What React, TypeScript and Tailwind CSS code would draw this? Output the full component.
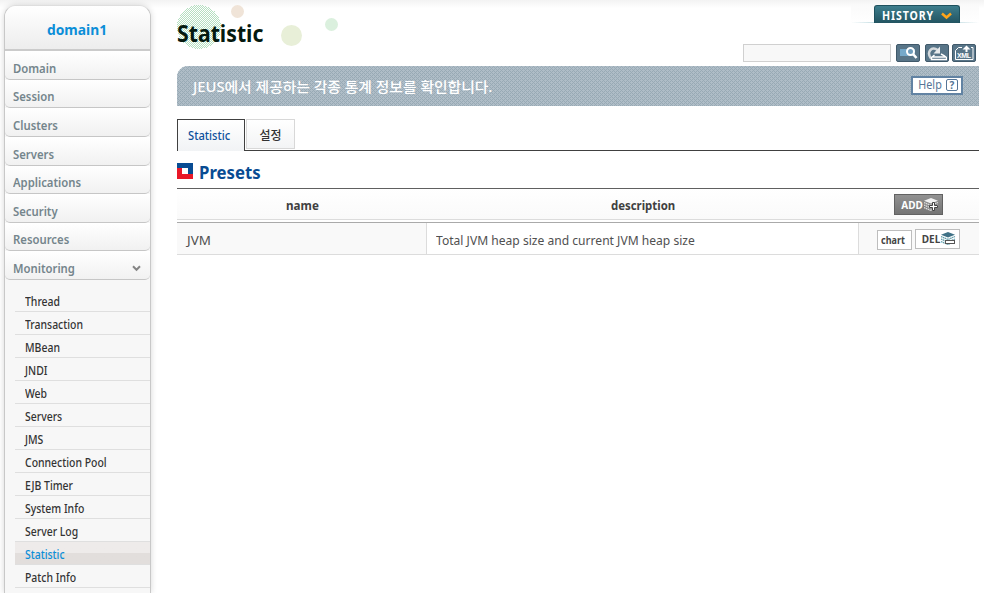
import React from "react";

const menu = ["Domain", "Session", "Clusters", "Servers", "Applications", "Security", "Resources", "Monitoring"];
const heights = ["h-[29px]", "h-[28px]", "h-[29px]", "h-[29px]", "h-[28px]", "h-[29px]", "h-[28px]", "h-[29px]"];
const monitoring = ["Thread", "Transaction", "MBean", "JNDI", "Web", "Servers", "JMS", "Connection Pool", "EJB Timer", "System Info", "Server Log", "Statistic", "Patch Info"];

function Label({ className = "", children }: { className?: string; children: React.ReactNode }) {
  return <span className={`inline-block origin-left whitespace-nowrap ${className}`}>{children}</span>;
}

function Sidebar() {
  return (
    <aside className="ml-1 mt-[5px] h-[588px] w-[147px] shrink-0 rounded-t-[12px] border border-b-0 border-[#c8c8c8] border-t-[#dedede] bg-[#f7f7f7] shadow-[0_0_6px_rgba(0,0,0,0.16)]">
      <div className="flex h-[45px] items-center justify-center rounded-t-[11px] border-b-2 border-[#cbcbcb] bg-linear-to-b from-white to-[#ededed] pl-[4px] pt-[3px] text-[15px] font-bold text-[#0b8ed8]">
        <Label className="origin-center scale-x-[0.92]">domain1</Label>
      </div>
      <nav>
        {menu.map((m, i) => (
          <div key={m} className={`flex items-center justify-between rounded-b-[5px] border-b border-[#c6c6c6] bg-linear-to-b from-white to-[#f1f1f1] pl-[7.500px] pr-[9px] pt-[7px] text-[13px] font-semibold text-[#74858c] ${heights[i]}`}>
            <Label className="scale-x-[0.87]">{m}</Label>
            {m === "Monitoring" && (
              <svg width="9" height="7" viewBox="0 0 9 7" fill="none" stroke="#858585" strokeWidth="2"><path d="M1 1.3 4.500 4.800 8 1.3" /></svg>
            )}
          </div>
        ))}
      </nav>
      <ul className="ml-[10px] mt-[9px]">
        {monitoring.map((m) => (
          <li key={m} className={`flex h-[23px] items-center border-b border-[#dfdfdf] pl-[9.500px] pt-[4px] text-[12px] font-medium ${m === "Statistic" ? "bg-linear-to-b from-[#eeebea] from-50% to-[#e2dedc] to-50% text-[#0b8ed8]" : "text-[#333]"}`}>
            <Label className="scale-x-[0.87]">{m}</Label>
          </li>
        ))}
      </ul>
    </aside>
  );
}

function ToolButton({ children }: { children: React.ReactNode }) {
  return <button className="flex h-[18px] w-[24px] items-center justify-center rounded-[2px] border border-[#40596a] bg-[#587588]">{children}</button>;
}

function Layers({ dark = false }: { dark?: boolean }) {
  const c = dark ? "#3f7186" : "#f2f2f2";
  const d = dark ? "#5f9ba8" : "#dedede";
  return (
    <svg width="15" height="14" viewBox="0 0 15 14" className="shrink-0">
      <path d="M7 0 14 2.800 7 5.500 0 2.800Z" fill={c} />
      <path d="m0 4.500 7 3 7-3M0 7l7 3 7-3M0 9.500l7 3 4-2" fill="none" stroke={d} strokeWidth="1.300" strokeDasharray="1.500 .5" />
      {dark ? <rect x="4.500" y="8.500" width="9" height="3" fill="#fff" stroke="#555" /> : (
        <path d="M8.500 4.500h2v3h3v2h-3v3h-2v-3h-3v-2h3z" fill="#fff" stroke="#444" />
      )}
    </svg>
  );
}

function Title() {
  return (
    <div className="relative h-[66px] w-[200px]">
      <svg className="absolute left-0 top-0" width="180" height="60">
        <defs>
          <pattern id="dots" width="2" height="2" patternUnits="userSpaceOnUse">
            <rect width="1" height="1" fill="#b5dfc1" /><rect x="1" y="1" width="1" height="1" fill="#b5dfc1" />
          </pattern>
        </defs>
        <circle cx="22" cy="27" r="22" fill="url(#dots)" shapeRendering="crispEdges" />
        <circle cx="60.500" cy="11.500" r="6.500" fill="#f0e4d8" />
        <circle cx="114.500" cy="35.500" r="10.500" fill="#e8efd8" />
        <circle cx="154.500" cy="24.500" r="6.500" fill="#dbf0de" />
      </svg>
      <h1 className="relative pt-[16px] text-[24px] font-bold leading-[34px] text-[#04190f]"><Label className="scale-x-[0.885]">Statistic</Label></h1>
    </div>
  );
}

function Tools() {
  return (
    <div className="flex flex-col items-end">
      <div className="mt-[5px] flex h-[18px] w-[128px] justify-center bg-linear-to-b from-[#fafafa] to-white">
        <div className="relative flex w-full pl-[23px]">
          <div className="absolute inset-x-0 bottom-0 h-px bg-linear-to-r from-transparent via-[#5fa4b2] to-transparent" />
          <button className="relative flex h-[18px] w-[86px] items-center gap-[6px] rounded-t-[3px] border border-b-0 border-[#1e515e] bg-linear-to-b from-[#3d7e8d] to-[#235461] pl-[7px] pt-[3px] text-[12px] font-bold leading-none tracking-[1px] text-white">
            <Label className="w-[53px] scale-x-[0.88]">HISTORY</Label>
            <svg width="11" height="8" viewBox="0 0 11 8" fill="none" stroke="#ffa51b" strokeWidth="2.500"><path d="m1 1.500 4.500 4 4.500-4" /></svg>
          </button>
        </div>
      </div>
      <div className="mr-[3px] mt-[21px] flex">
        <input className="mr-[5px] h-[18px] w-[148px] border border-[#d0d0d0] bg-[#f8f8f8]" />
        <ToolButton>
          <svg width="20" height="14" viewBox="0 0 20 14"><path d="M2 3h15v7H2z" fill="#75a9ca" /><circle cx="12.500" cy="5.500" r="3.500" fill="#6f9dbc" stroke="#fff" strokeWidth="2" /><path d="m15 8 3.500 4" stroke="#fff" strokeWidth="2.500" /></svg>
        </ToolButton>
        <div className="w-[5px]" />
        <ToolButton>
          <svg width="20" height="15" viewBox="0 0 20 15" fill="none"><path d="M4 12.500C-1 6 5-.5 10.500 4" stroke="#d5dadd" strokeWidth="2.500" /><path d="M13 .5v7H6.500z" fill="#e7eaec" /><path d="M7.500 9 4.500 11.500v2h15v-2l-2.500-2-3-1.500M5 11h14" stroke="#fff" strokeWidth="1.400" /></svg>
        </ToolButton>
        <div className="w-[3px]" />
        <ToolButton>
          <svg width="20" height="16" viewBox="0 0 20 16" fill="none" stroke="#fff"><path d="M8 2.500H4.500l-3 3v9h17.500v-12h-2" /><path d="M12.500 7V3" strokeWidth="2" /><path d="M8.500 4.500h8l-4-4z" fill="#fff" stroke="none" /><text x="3" y="13" fontSize="7" fontWeight="700" fontFamily="Liberation Sans, sans-serif" fill="#fff" stroke="none" textLength="14">XML</text></svg>
        </ToolButton>
      </div>
    </div>
  );
}

function Banner() {
  return (
    <div className="relative flex h-[40px] items-center justify-between overflow-hidden rounded-tl-[11px] bg-[#afbdc7] pl-[16px] pr-[16px]">
      <svg className="absolute inset-0 h-full w-full" shapeRendering="crispEdges">
        <defs>
          <pattern id="mesh" width="4" height="4" patternUnits="userSpaceOnUse">
            <path d="M0 0h1v1H0zM1 1h1v1H1zM2 2h1v1H2zM3 3h1v1H3zM3 1h1v1H3zM1 3h1v1H1z" fill="#98aab5" />
          </pattern>
        </defs>
        <rect width="100%" height="100%" fill="url(#mesh)" />
      </svg>
      <p className="relative text-[14px] font-medium text-white"><Label className="scale-x-[1.055]">JEUS에서 제공하는 각종 통계 정보를 확인합니다.</Label></p>
      <button className="relative mb-[2px] flex h-[19px] w-[52px] items-center border-2 border-[#6283a3] bg-white pl-[4px] text-[12px] text-[#557596]">
        <Label className="w-[29px] scale-x-[0.9]">Help</Label>
        <span className="flex h-[12px] w-[12px] shrink-0 items-center justify-center rounded-[2px] border border-[#557596] text-[10px] font-bold leading-none">?</span>
      </button>
    </div>
  );
}

function Presets() {
  return (
    <section>
      <h2 className="flex h-[37px] items-center gap-[6px] text-[18px] font-bold text-[#084c93]">
        <svg className="mt-[3px]" width="16" height="16" shapeRendering="crispEdges"><path d="M0 0h16v16H0z" fill="#e91828" /><path d="M0 0h16v11h-5V5H0z" fill="#084c93" /><path d="M5 5h6v6H5z" fill="#fff" /></svg>
        <Label className="mt-[5px] scale-x-[0.93]">Presets</Label>
      </h2>
      <div className="grid h-[32px] grid-cols-[250px_432px_120px] items-center border-b border-t border-b-[#dcdcdc] border-t-[#606060] bg-linear-to-b from-white to-[#fafafa] text-center text-[12px] font-bold text-[#404040]">
        <span className="pl-[1px] pt-[3px]"><Label className="origin-center scale-x-[0.97]">name</Label></span>
        <span className="pl-[4px] pt-[3px]"><Label className="origin-center scale-x-[0.95]">description</Label></span>
        <button className="ml-[35px] mt-px flex h-[21px] w-[49px] items-center border border-[#626262] bg-linear-to-b from-[#929292] to-[#747474] pl-[5px] text-[10px] text-white">
          <Label className="mt-px w-[24px]">ADD</Label><Layers />
        </button>
      </div>
      <div className="mt-[2px] grid h-[33px] grid-cols-[250px_432px_120px] border-b border-t border-b-[#dcdcdc] border-t-[#aaa] text-[13px] text-[#505050]">
        <div className="flex items-center border-r border-[#dcdcdc] bg-[#f9f9f9] pl-[10px] pt-[4px]"><Label className="scale-x-[1.03]">JVM</Label></div>
        <div className="flex items-center border-r border-[#dcdcdc] pl-[9px] pt-[4px]"><Label className="scale-x-[0.93]">Total JVM heap size and current JVM heap size</Label></div>
        <div className="flex items-center gap-[3px] bg-[#f9f9f9] pl-[18px] text-[10px] font-bold text-[#444]">
          <button className="mt-[2px] flex h-[20px] w-[35px] items-center justify-center border border-[#bdbdbd] bg-white pt-px"><Label className="origin-center scale-x-[0.9]">chart</Label></button>
          <button className="flex h-[20px] w-[45px] items-center border border-[#bdbdbd] bg-white pl-[5px]"><Label className="mt-px w-[20px]">DEL</Label><Layers dark /></button>
        </div>
      </div>
    </section>
  );
}

export default function App() {
  return (
    <div className="flex h-[593px] w-[984px] overflow-hidden bg-[linear-gradient(#f3f3f3,#ffffff_8px)] font-['Noto_Sans','Noto_Sans_CJK_KR',sans-serif]">
      <Sidebar />
      <main className="ml-[26px] w-[802px]">
        <header className="flex h-[66px] justify-between"><Title /><Tools /></header>
        <Banner />
        <div className="mt-[13px] flex h-[32px] text-[12px] font-medium">
          <button className="flex w-[68px] items-center justify-center border border-b-0 border-[#404040] bg-linear-to-b from-white to-[#f1f3f5] text-[#0c509c]"><Label className="origin-center scale-x-[0.93]">Statistic</Label></button>
          <div className="flex flex-1 border-b border-[#404040] pl-px"><button className="h-[30px] w-[49px] border border-[#d8d8d8] bg-linear-to-b from-white to-[#f3f4f5] pt-[3px] text-[#333]">설정</button></div>
        </div>
        <Presets />
      </main>
    </div>
  );
}
